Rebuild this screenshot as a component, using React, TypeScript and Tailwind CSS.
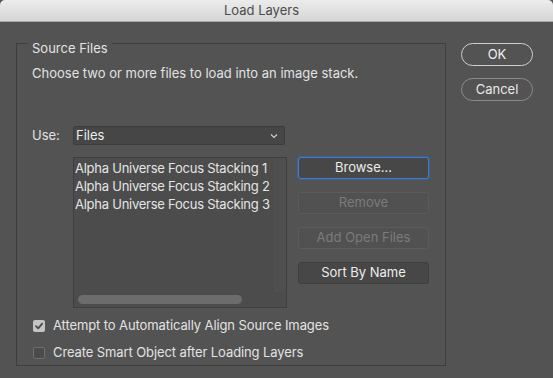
import React from "react";

const files = [
  "Alpha Universe Focus Stacking 1",
  "Alpha Universe Focus Stacking 2",
  "Alpha Universe Focus Stacking 3",
];

const SideButton = ({
  label,
  disabled,
  focused,
}: {
  label: string;
  disabled?: boolean;
  focused?: boolean;
}) => (
  <button
    className={`h-[22px] w-[131px] rounded-[3px] border text-[13px] leading-none ${
      focused
        ? "border-[#4b79c0] bg-[#474747] text-[#ececec] shadow-[0_0_0_1px_#3a5f99]"
        : disabled
        ? "border-[#5b5b5b] bg-[#515151] text-[#7b7b7b]"
        : "border-[#3f3f3f] bg-[#474747] text-[#ececec]"
    }`}
  >
    {label}
  </button>
);

const Checkbox = ({ checked, label }: { checked?: boolean; label: string }) => (
  <div className="flex items-center h-[12px]">
    <div
      className={`w-[12px] h-[12px] rounded-[2px] flex items-center justify-center ${
        checked ? "bg-[#c4c4c4]" : "border border-[#6e6e6e] bg-[#4b4b4b]"
      }`}
    >
      {checked && (
        <svg width="10" height="10" viewBox="0 0 10 10">
          <path d="M2 5.2 L4.2 7.4 L8.2 2.6" fill="none" stroke="#4a4a4a" strokeWidth="1.8" strokeLinecap="round" strokeLinejoin="round" />
        </svg>
      )}
    </div>
    <span className="ml-[8px] text-[13px] tracking-[-0.1px] text-[#e2e2e2]">{label}</span>
  </div>
);

export default function App() {
  return (
    <div
      className="w-[553px] h-[378px] bg-[#535353] flex flex-col overflow-hidden"
      style={{ fontFamily: "Inter, 'Liberation Sans', sans-serif" }}
    >
      {/* title bar */}
      <div className="h-[22px] shrink-0 bg-gradient-to-b from-[#ececec] to-[#d6d6d6] border-b border-[#a9a9a9] flex items-center justify-center pr-[30px] rounded-t-[5px]">
        <span className="text-[13px] text-[#4b4b4b]">Load Layers</span>
      </div>

      <div className="flex pl-[16px] pt-[21px]">
        {/* group box */}
        <div className="relative w-[430px] h-[323px] border border-[#3e3e3e] flex flex-col pl-[15px]">
          <span className="absolute left-[11px] -top-[4px] px-[4px] bg-[#535353] text-[13px] leading-[16px] text-[#e4e4e4]">
            Source Files
          </span>

          <div className="mt-[21px] text-[13px] leading-[16px] text-[#e2e2e2]">
            Choose two or more files to load into an image stack.
          </div>

          <div className="mt-[45px] flex items-center">
            <span className="w-[41px] text-[13px] text-[#e2e2e2]">Use:</span>
            <div className="w-[212px] h-[19px] rounded-[2px] border border-[#3c3c3c] bg-[#464646] flex items-center justify-between pl-[2px] pr-[6px]">
              <span className="text-[13px] text-[#ececec]">Files</span>
              <svg width="8" height="6" viewBox="0 0 8 6">
                <path d="M1 1.5 L4 4.5 L7 1.5" fill="none" stroke="#d0d0d0" strokeWidth="1.1" />
              </svg>
            </div>
          </div>

          <div className="mt-[11px] flex">
            <div className="ml-[41px] w-[214px] h-[151px] border border-[#3e3e3e] bg-[#4c4c4c] flex flex-col relative">
              <div className="flex flex-1">
                <div className="w-[198px] overflow-hidden pl-[1px] pt-[1px]">
                  {files.map((f) => (
                    <div key={f} className="h-[18px] leading-[18px] whitespace-nowrap text-[13px] tracking-[-0.25px] text-[#e4e4e4]">
                      {f}
                    </div>
                  ))}
                </div>
                <div className="flex-1 bg-[#4f4f4f] border-l border-[#4a4a4a]" />
              </div>
              <div className="h-[15px] flex items-center pl-[4px]">
                <div className="w-[164px] h-[9px] rounded-full bg-[#6c6c6c]" />
              </div>
            </div>

            <div className="ml-[11px] flex flex-col gap-[13px]">
              <SideButton label="Browse..." focused />
              <SideButton label="Remove" disabled />
              <SideButton label="Add Open Files" disabled />
              <SideButton label="Sort By Name" />
            </div>
          </div>

          <div className="mt-[12px] flex flex-col gap-[15px] pl-[1px]">
            <Checkbox checked label="Attempt to Automatically Align Source Images" />
            <Checkbox label="Create Smart Object after Loading Layers" />
          </div>
        </div>

        {/* dialog buttons */}
        <div className="ml-[15px] flex flex-col gap-[12px]">
          <button className="w-[72px] h-[23px] rounded-full border-[1.5px] border-[#cfcfcf] text-[13px] text-[#f0f0f0]">
            OK
          </button>
          <button className="w-[72px] h-[23px] rounded-full border border-[#8a8a8a] text-[13px] text-[#e8e8e8]">
            Cancel
          </button>
        </div>
      </div>
    </div>
  );
}
